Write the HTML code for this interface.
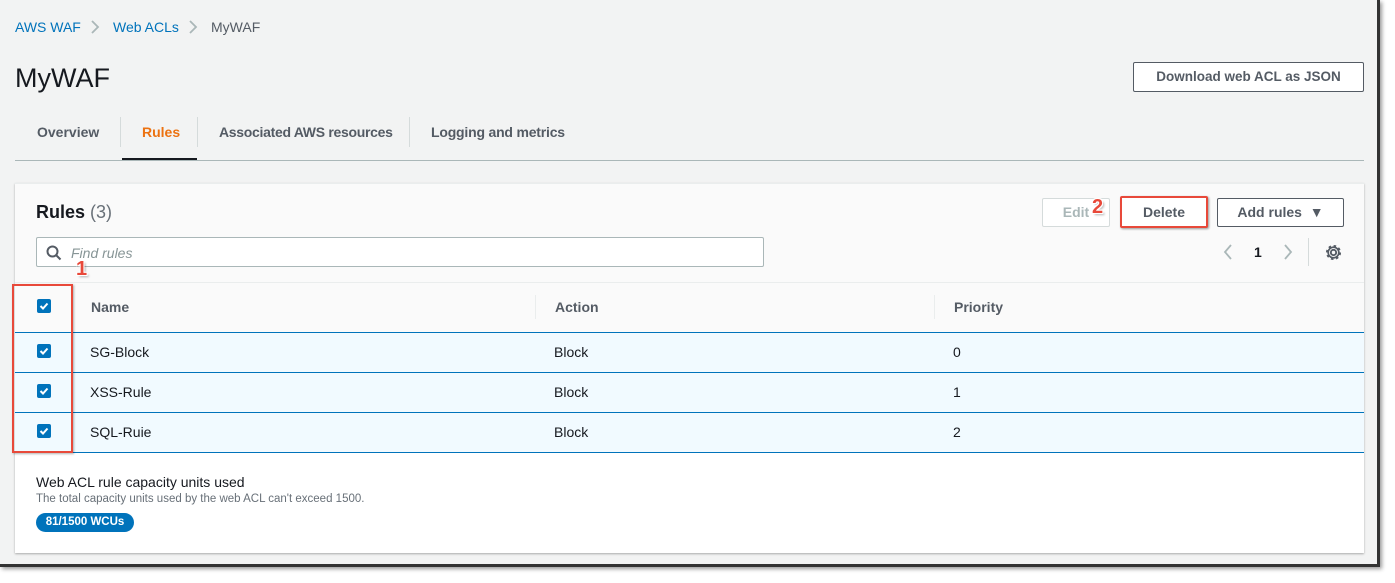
<!DOCTYPE html>
<html><head><meta charset="utf-8"><style>
*{box-sizing:border-box;margin:0;padding:0}
body{width:1395px;height:583px;background:#fff;font-family:"Liberation Sans",Arial,sans-serif;position:relative;overflow:hidden;color:#16191f}
.bg{position:absolute;left:0;top:0;width:1380px;height:567px;background:#f2f3f3;border-right:3px solid #333;border-bottom:3px solid #333;box-shadow:2px 2px 4px rgba(0,0,0,.4)}
.abs{position:absolute;white-space:nowrap}
.link{color:#0073bb;font-size:14px}
.btn{position:absolute;border:1px solid #545b64;border-radius:2px;background:#fff;font-weight:bold;font-size:14px;color:#545b64;text-align:center}
.tab{position:absolute;top:124px;font-size:14px;font-weight:bold;color:#545b64}
.sep{position:absolute;width:1px;background:#d5dbdb}
.panel{position:absolute;left:15px;top:183px;width:1349px;height:370px;background:#fff;box-shadow:0 1px 2px rgba(0,0,0,.3);border-top:1px solid #eaeded}
.cb{position:absolute;left:37px;width:14px;height:14px;background:#0073bb;border-radius:2px}
.cb svg{position:absolute;left:2px;top:2px}
.row{position:absolute;left:15px;width:1349px;height:41px;background:#f1faff;border-top:1px solid #0073bb;border-bottom:1px solid #0073bb;font-size:14px;color:#16191f}
.row span{position:absolute;top:11px}
</style></head><body>
<div class="bg"></div>
<div class="abs link" style="left:15px;top:19px">AWS WAF</div>
<svg class="abs" style="left:90px;top:20px" width="10" height="14" viewBox="0 0 10 14"><path d="M2 1l6 6-6 6" fill="none" stroke="#aab7b8" stroke-width="1.8"/></svg>
<div class="abs link" style="left:113px;top:19px">Web ACLs</div>
<svg class="abs" style="left:188px;top:20px" width="10" height="14" viewBox="0 0 10 14"><path d="M2 1l6 6-6 6" fill="none" stroke="#aab7b8" stroke-width="1.8"/></svg>
<div class="abs" style="left:211px;top:19px;font-size:14px;color:#545b64">MyWAF</div>
<div class="abs" style="left:15px;top:63px;font-size:27px;color:#16191f">MyWAF</div>
<div class="btn" style="left:1133px;top:62px;width:231px;height:30px;line-height:28px;font-size:13.5px">Download web ACL as JSON</div>
<div class="tab" style="left:37px">Overview</div>
<div class="tab" style="left:142px;color:#ec7211">Rules</div>
<div class="tab" style="left:219px;letter-spacing:-0.3px">Associated AWS resources</div>
<div class="tab" style="left:431px;letter-spacing:-0.2px">Logging and metrics</div>
<div class="sep" style="left:120px;top:117px;height:30px"></div>
<div class="sep" style="left:197px;top:117px;height:30px"></div>
<div class="sep" style="left:409px;top:117px;height:30px"></div>
<div class="abs" style="left:122px;top:158px;width:75px;height:3px;background:#16191f"></div>
<div class="abs" style="left:15px;top:160px;width:1349px;height:1px;background:#aab7b8"></div>

<div class="panel">
 <div style="position:absolute;left:0;top:0;width:1349px;height:99px;background:#fafafa"></div>
</div>
<div class="abs" style="left:36px;top:202px;font-size:18px;font-weight:bold">Rules <span style="font-weight:normal;color:#687078">(3)</span></div>
<div class="abs" style="left:36px;top:237px;width:728px;height:30px;border:1px solid #aab7b8;border-radius:2px;background:#fff"></div>
<svg class="abs" style="left:46px;top:245px" width="16" height="16" viewBox="0 0 16 16"><circle cx="6.5" cy="6.5" r="5" fill="none" stroke="#545b64" stroke-width="2"/><path d="M10 10l4.5 4.5" stroke="#545b64" stroke-width="2"/></svg>
<div class="abs" style="left:71px;top:245px;font-size:14px;font-style:italic;color:#879596">Find rules</div>
<div class="btn" style="left:1042px;top:198px;width:68px;height:29px;line-height:27px;border-color:#d5dbdb;color:#aab7b8">Edit</div>
<div class="abs" style="left:1092px;top:196px;font-size:20px;font-weight:bold;color:#e8493a;text-shadow:1px 1px 0 #fff,-1px -1px 0 #fff,1px -1px 0 #fff,-1px 1px 0 #fff,2px 2px 2px rgba(0,0,0,.3)">2</div>
<div class="btn" style="left:1120px;top:196px;width:88px;height:32px;line-height:28px;border:2px solid #e8493a;color:#545b64;box-shadow:1px 1px 2px rgba(0,0,0,.4)">Delete</div>
<div class="btn" style="left:1217px;top:198px;width:127px;height:29px;line-height:27px">Add rules &nbsp;&#9660;</div>
<svg class="abs" style="left:1223px;top:244px" width="10" height="16" viewBox="0 0 10 16"><path d="M8 1L2 8l6 7" fill="none" stroke="#aab7b8" stroke-width="1.8"/></svg>
<div class="abs" style="left:1254px;top:244px;font-size:14px;font-weight:bold">1</div>
<svg class="abs" style="left:1283px;top:244px" width="10" height="16" viewBox="0 0 10 16"><path d="M2 1l6 7-6 7" fill="none" stroke="#aab7b8" stroke-width="1.8"/></svg>
<div class="sep" style="left:1308px;top:238px;height:28px"></div>
<svg class="abs" style="left:1325px;top:244px" width="17" height="17" viewBox="0 0 16 16"><circle cx="8" cy="8" r="2.5" fill="none" stroke="#545b64" stroke-width="1.8"/><circle cx="8" cy="8" r="6" fill="none" stroke="#545b64" stroke-width="2.2" stroke-dasharray="2.3 2.4"/><circle cx="8" cy="8" r="5" fill="none" stroke="#545b64" stroke-width="1.6"/></svg>

<div class="abs" style="left:15px;top:282px;width:1349px;height:1px;background:#eaeded"></div>
<div class="abs" style="left:15px;top:283px;width:1349px;height:49px;background:#fafafa"></div>
<div class="cb" style="top:299px"><svg width="10" height="10" viewBox="0 0 10 10"><path d="M1.5 5l2.5 2.5 4.5-5" stroke="#fff" stroke-width="2" fill="none"/></svg></div>
<div class="abs" style="left:91px;top:299px;font-size:14px;font-weight:bold;color:#545b64">Name</div>
<div class="sep" style="left:535px;top:295px;height:24px;background:#eaeded"></div>
<div class="abs" style="left:555px;top:299px;font-size:14px;font-weight:bold;color:#545b64">Action</div>
<div class="sep" style="left:934px;top:295px;height:24px;background:#eaeded"></div>
<div class="abs" style="left:954px;top:299px;font-size:14px;font-weight:bold;color:#545b64">Priority</div>

<div class="row" style="top:332px"><span style="left:75px">SG-Block</span><span style="left:539px">Block</span><span style="left:938px">0</span></div>
<div class="row" style="top:372px"><span style="left:75px">XSS-Rule</span><span style="left:539px">Block</span><span style="left:938px">1</span></div>
<div class="row" style="top:412px"><span style="left:75px">SQL-Ruie</span><span style="left:539px">Block</span><span style="left:938px">2</span></div>
<div class="cb" style="top:344px"><svg width="10" height="10" viewBox="0 0 10 10"><path d="M1.5 5l2.5 2.5 4.5-5" stroke="#fff" stroke-width="2" fill="none"/></svg></div>
<div class="cb" style="top:384px"><svg width="10" height="10" viewBox="0 0 10 10"><path d="M1.5 5l2.5 2.5 4.5-5" stroke="#fff" stroke-width="2" fill="none"/></svg></div>
<div class="cb" style="top:424px"><svg width="10" height="10" viewBox="0 0 10 10"><path d="M1.5 5l2.5 2.5 4.5-5" stroke="#fff" stroke-width="2" fill="none"/></svg></div>
<div class="abs" style="left:12px;top:284px;width:61px;height:169px;border:2px solid #e8493a;box-shadow:1px 1px 2px rgba(0,0,0,.3)"></div>
<div class="abs" style="left:76px;top:258px;font-size:20px;font-weight:bold;color:#e8493a;text-shadow:1px 1px 0 #fff,-1px -1px 0 #fff,1px -1px 0 #fff,-1px 1px 0 #fff,2px 2px 2px rgba(0,0,0,.3)">1</div>

<div class="abs" style="left:36px;top:474px;font-size:14px">Web ACL rule capacity units used</div>
<div class="abs" style="left:36px;top:493px;font-size:11.5px;color:#687078">The total capacity units used by the web ACL can't exceed 1500.</div>
<div class="abs" style="left:36px;top:513px;width:98px;height:19px;border-radius:10px;background:#0073bb;color:#fff;font-size:11.5px;font-weight:bold;text-align:center;line-height:19px">81/1500 WCUs</div>
</body></html>
